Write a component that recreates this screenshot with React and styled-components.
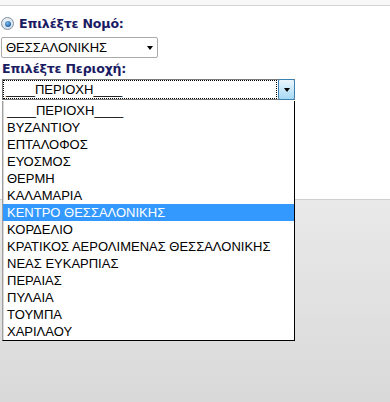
import React from "react";
import styled, { createGlobalStyle } from "styled-components";

const Global = createGlobalStyle`
  html, body { margin: 0; padding: 0; background: #ffffff; }
  body { width: 390px; height: 402px; overflow: hidden; }
  #root { height: 402px; }
`;

const Page = styled.div`
  position: relative;
  display: flex;
  flex-direction: column;
  width: 390px;
  height: 402px;
  font-family: "Liberation Sans", Arial, sans-serif;
`;

const TopStrip = styled.div`
  height: 5px;
  background: #f7f7f7;
  border-bottom: 1px solid #d4d4d4;
  flex: none;
`;

const Content = styled.div`
  height: 193px;
  flex: none;
  background: #fff;
  padding: 10px 0 0 1px;
  box-sizing: border-box;
  display: flex;
  flex-direction: column;
`;

const Footer = styled.div`
  flex: 1;
  border-top: 1px solid #cfcfcf;
  background: linear-gradient(#e9e9e9, #d9d9da);
`;

const RadioRow = styled.label`
  display: flex;
  align-items: center;
  gap: 5px;
  height: 15px;
`;

const Radio = styled.span`
  width: 11px;
  height: 11px;
  border-radius: 50%;
  border: 1px solid #7d8fa3;
  background: radial-gradient(circle at 50% 40%, #f6f9fc 0%, #cdd9e5 100%);
  display: flex;
  align-items: center;
  justify-content: center;
  &::after {
    content: "";
    width: 6px;
    height: 6px;
    border-radius: 50%;
    background: radial-gradient(circle at 40% 35%, #7cc0f2, #1a5a9c 75%);
  }
`;

const Label = styled.span`
  font-family: "DejaVu Sans", Verdana, sans-serif;
  font-weight: bold;
  font-size: 12.6px;
  letter-spacing: -0.2px;
  color: #1b1b63;
  line-height: 15px;
  margin-left: ${(p) => p.$indent || 0}px;
  margin-top: ${(p) => p.$mt || 0}px;
`;

const Select = styled.div`
  display: flex;
  align-items: center;
  justify-content: space-between;
  box-sizing: border-box;
  width: ${(p) => p.$w}px;
  height: 21px;
  margin-top: ${(p) => p.$mt}px;
  border: 1px solid #a9a9a9;
  border-radius: 2px;
  background: #fff;
  font-size: 13px;
  color: #000;
  padding: 0 4px 0 4px;
`;

const Caret = styled.span`
  width: 0;
  height: 0;
  border-left: 3.5px solid transparent;
  border-right: 3.5px solid transparent;
  border-top: 4px solid #000;
`;

const Combo = styled.div`
  display: flex;
  box-sizing: border-box;
  width: 293px;
  height: 21px;
  margin-top: 3px;
  margin-left: 1px;
  border: 1px solid #7a7a7a;
  border-right: none;
  background: #fff;
  font-size: 13px;
`;

const ComboValue = styled.div`
  flex: 1;
  display: flex;
  align-items: center;
  border: 1px dotted #000;
  padding-left: 2px;
  margin: 0 1px 0 0;
  white-space: pre;
`;

const ComboButton = styled.div`
  width: 17px;
  box-sizing: border-box;
  border: 1px solid #3c7fb1;
  border-radius: 2px;
  margin-top: -1px;
  margin-bottom: -1px;
  background: linear-gradient(#eaf6fd, #a7d9f5);
  display: flex;
  align-items: center;
  justify-content: center;
`;

const ListBox = styled.ul`
  position: absolute;
  left: 2px;
  top: 101px;
  width: 293px;
  box-sizing: border-box;
  margin: 0;
  padding: 0;
  list-style: none;
  background: #fff;
  border: 1px solid #000;
  border-left-color: #a0a0a0;
  border-top: none;
  box-shadow: inset 1px 0 0 #d8d8d8;
  font-size: 13px;
  padding-top: 1px;
`;

const Option = styled.li`
  height: 17px;
  line-height: 17px;
  padding-left: 4px;
  white-space: pre;
  color: ${(p) => (p.$active ? "#fff" : "#000")};
  background: ${(p) => (p.$active ? "#3399ff" : "transparent")};
`;

const areas = [
  "____ΠΕΡΙΟΧΗ____",
  "ΒΥΖΑΝΤΙΟΥ",
  "ΕΠΤΑΛΟΦΟΣ",
  "ΕΥΟΣΜΟΣ",
  "ΘΕΡΜΗ",
  "ΚΑΛΑΜΑΡΙΑ",
  "ΚΕΝΤΡΟ ΘΕΣΣΑΛΟΝΙΚΗΣ",
  "ΚΟΡΔΕΛΙΟ",
  "ΚΡΑΤΙΚΟΣ ΑΕΡΟΛΙΜΕΝΑΣ ΘΕΣΣΑΛΟΝΙΚΗΣ",
  "ΝΕΑΣ ΕΥΚΑΡΠΙΑΣ",
  "ΠΕΡΑΙΑΣ",
  "ΠΥΛΑΙΑ",
  "ΤΟΥΜΠΑ",
  "ΧΑΡΙΛΑΟΥ",
];

export default function App() {
  return (
    <Page>
      <Global />
      <TopStrip />
      <Content>
        <RadioRow>
          <Radio />
          <Label>Επιλέξτε Νομό:</Label>
        </RadioRow>
        <Select $w={157} $mt={6}>
          <span>ΘΕΣΣΑΛΟΝΙΚΗΣ</span>
          <Caret />
        </Select>
        <Label $indent={1} $mt={3}>Επιλέξτε Περιοχή:</Label>
        <Combo>
          <ComboValue>____ΠΕΡΙΟΧΗ____</ComboValue>
          <ComboButton>
            <Caret />
          </ComboButton>
        </Combo>
      </Content>
      <Footer />
      <ListBox>
        {areas.map((a, i) => (
          <Option key={a} $active={i === 6}>
            {a}
          </Option>
        ))}
      </ListBox>
    </Page>
  );
}
